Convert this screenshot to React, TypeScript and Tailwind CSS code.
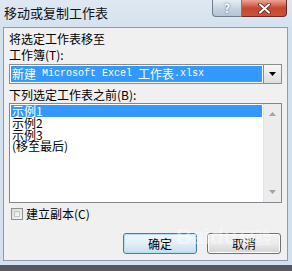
import React from "react"

const cjk = { fontFamily: '"Noto Sans CJK SC", "Liberation Sans", sans-serif' }

export default function App() {
  const items = ["示例1", "示例2", "示例3", "(移至最后)"]

  return (
    <div
      className="relative w-[292px] h-[271px] overflow-hidden flex flex-col bg-[#d3e1ef] text-black"
      style={cjk}
    >
      {/* title bar */}
      <div className="h-[27px] flex items-start bg-gradient-to-b from-[#dfe8f2] to-[#d5e2ef]">
        <div className="pl-[4px] pt-[4px] text-[13px] leading-[18px] text-[#111]">移动或复制工作表</div>
        <div className="ml-auto mr-[5px] flex">
          <div className="w-[30px] h-[17px] rounded-bl-[4px] border border-t-0 border-[#6f7c8c] bg-gradient-to-b from-[#e6edf4] via-[#c9d5e2] to-[#b3c2d3] flex items-center justify-center text-[12px] font-bold text-white [text-shadow:0_0_2px_#44546a]">
            ?
          </div>
          <div className="w-[45px] h-[17px] rounded-br-[4px] border border-l-0 border-t-0 border-[#6b2a22] bg-gradient-to-b from-[#e8a596] via-[#c7452f] to-[#c9553d] flex items-center justify-center">
            <svg width="13" height="11" viewBox="0 0 13 11">
              <path d="M2 1.5 L11 9.5 M11 1.5 L2 9.5" stroke="#5a1a12" strokeWidth="3.6" strokeLinecap="round" />
              <path d="M2 1.5 L11 9.5 M11 1.5 L2 9.5" stroke="#ffffff" strokeWidth="2.2" strokeLinecap="round" />
            </svg>
          </div>
        </div>
      </div>

      {/* client area */}
      <div className="ml-[3px] mr-[4px] h-[234px] border border-[#8f9dab] bg-[#f0f0f0] pl-[5px] pr-[5px] flex flex-col text-[12px]">
        <div className="mt-[3px] leading-[16px]">
          <div>将选定工作表移至</div>
          <div>工作簿(T):</div>
        </div>

        {/* combobox */}
        <div className="mt-[1px] h-[20px] flex border border-[#8b8b8b] bg-white">
          <div className="flex-1 p-[1px]">
            <div className="h-full bg-[#3399ff] text-white flex items-center pl-[1px] whitespace-nowrap leading-none">
              <span>新建</span>
              <span className="text-[10px] tracking-[0px]" style={{ fontFamily: '"Liberation Mono", monospace' }}>
                &nbsp;Microsoft Excel&nbsp;
              </span>
              <span>工作表</span>
              <span className="text-[10px]" style={{ fontFamily: '"Liberation Mono", monospace' }}>.xlsx</span>
            </div>
          </div>
          <div className="w-[18px] border-l border-[#8b8b8b] bg-gradient-to-b from-[#f6f6f6] to-[#dedede] flex items-center justify-center">
            <svg width="7" height="4" viewBox="0 0 7 4">
              <path d="M0 0 H7 L3.5 4 Z" fill="#000" />
            </svg>
          </div>
        </div>

        <div className="mt-[3px] leading-[16px]">下列选定工作表之前(B):</div>

        {/* list box */}
        <div className="h-[100px] flex border border-[#828790] bg-white">
          <div className="flex-1 p-[1px] leading-[12px]">
            {items.map((item, i) => (
              <div
                key={i}
                className={
                  i === 0
                    ? "h-[12px] bg-[#3399ff] text-white pl-[1px]"
                    : "h-[11.5px] pl-[1px]"
                }
              >
                {item}
              </div>
            ))}
          </div>
          <div className="w-[18px] bg-[#ececec] border-l border-[#e2e2e2] flex flex-col items-center justify-between py-[8px]">
            <svg width="7" height="4" viewBox="0 0 7 4">
              <path d="M0 4 H7 L3.5 0 Z" fill="#a3a3a3" />
            </svg>
            <svg width="7" height="4" viewBox="0 0 7 4">
              <path d="M0 0 H7 L3.5 4 Z" fill="#a3a3a3" />
            </svg>
          </div>
        </div>

        {/* checkbox */}
        <div className="mt-[5px] ml-[2px] flex items-center gap-[3px] h-[12px]">
          <div className="w-[12px] h-[12px] border border-[#8e8f8f] bg-gradient-to-br from-[#dcdcdc] to-[#f6f6f6] p-[2px]">
            <div className="w-full h-full border border-[#c4c4c4] bg-gradient-to-br from-[#e6e6e6] to-[#fafafa]" />
          </div>
          <span className="leading-[14px]">建立副本(C)</span>
        </div>

        {/* buttons */}
        <div className="mt-[13px] mr-[1px] flex justify-end gap-[10px]">
          <div className="w-[74px] h-[21px] rounded-[3px] border border-[#3c7fb1] bg-gradient-to-b from-[#f2f8fc] via-[#e3eef7] to-[#c8dcec] flex items-center justify-center shadow-[inset_0_0_0_1px_#b6def5]">
            确定
          </div>
          <div className="w-[74px] h-[21px] rounded-[3px] border border-[#707070] bg-gradient-to-b from-[#f2f2f2] via-[#ebebeb] to-[#d4d4d4] flex items-center justify-center shadow-[inset_0_0_0_1px_#fcfcfc]">
            取消
          </div>
        </div>
      </div>

      <div className="h-[4px]" />
      <div className="flex-1 bg-[#55595e]" />

      {/* baidu watermark */}
      <div
        className="absolute left-[176px] top-[226px] text-[22px] font-bold leading-none text-white/40 whitespace-nowrap"
        style={{ fontFamily: '"Liberation Sans", "Noto Sans CJK SC", sans-serif' }}
      >
        Baidu<span className="text-[16px] ml-[2px]">经验</span>
      </div>
    </div>
  )
}
